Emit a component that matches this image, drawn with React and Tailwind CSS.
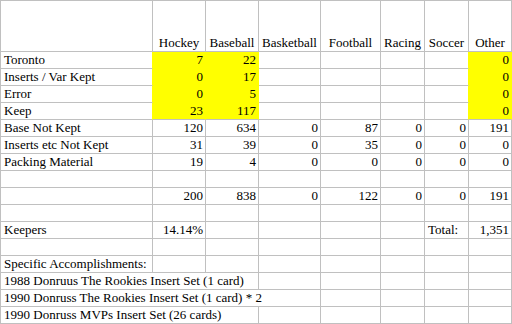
const GRAY_R = "border-r-[#c0c0c0]";
const GRAY_B = "border-b-[#c0c0c0]";
const YEL_R = "border-r-[#ffff00]";
const YEL_B = "border-b-[#ffff00]";

const sports = ["Hockey", "Baseball", "Basketball", "Football", "Racing", "Soccer", "Other"];

const rows = [
  { label: "Toronto", vals: ["7", "22", "", "", "", "", "0"], yellow: true },
  { label: "Inserts / Var Kept", vals: ["0", "17", "", "", "", "", "0"], yellow: true },
  { label: "Error", vals: ["0", "5", "", "", "", "", "0"], yellow: true },
  { label: "Keep", vals: ["23", "117", "", "", "", "", "0"], yellow: true, last: true },
  { label: "Base Not Kept", vals: ["120", "634", "0", "87", "0", "0", "191"] },
  { label: "Inserts etc Not Kept", vals: ["31", "39", "0", "35", "0", "0", "0"] },
  { label: "Packing Material", vals: ["19", "4", "0", "0", "0", "0", "0"] },
  { label: "", vals: ["", "", "", "", "", "", ""] },
  { label: "", vals: ["200", "838", "0", "122", "0", "0", "191"] },
  { label: "", vals: ["", "", "", "", "", "", ""] },
];

const Cell = ({ children, align = "right", bg = "", r = GRAY_R, b = GRAY_B, span = "" }) => {
  const alignCls =
    align === "left" ? "justify-start pl-[3px]" : align === "center" ? "justify-center" : "justify-end pr-[2px]";
  return (
    <div className={`flex items-end whitespace-nowrap border-r border-b pb-[1px] leading-[15px] ${alignCls} ${bg} ${r} ${b} ${span}`}>
      {children}
    </div>
  );
};

const Empty = ({ n }) => Array.from({ length: n }).map((_, i) => <Cell key={i} />);

export default function App() {
  return (
    <div
      className="grid h-[324px] w-[512px] grid-cols-[152px_53px_53px_62px_60px_44px_44px_43px] grid-rows-[51px_repeat(16,17px)] border-l border-t border-[#c0c0c0] bg-white text-[13px] text-black"
      style={{ fontFamily: '"Liberation Serif", "Times New Roman", serif' }}
    >
      <Cell />
      {sports.map((s) => (
        <Cell key={s} align="center">
          {s}
        </Cell>
      ))}

      {rows.map((row, i) => {
        const yb = row.yellow && !row.last ? YEL_B : GRAY_B;
        return (
          <div key={i} className="contents">
            <Cell align="left" r={row.yellow ? YEL_R : GRAY_R}>
              {row.label}
            </Cell>
            {row.vals.map((v, j) => {
              const isYellowCol = row.yellow && (j === 0 || j === 1 || j === 6);
              const hidesRight = row.yellow && (j === 0 || j === 1 || j === 5 || j === 6);
              return (
                <Cell
                  key={j}
                  bg={isYellowCol ? "bg-[#ffff00]" : ""}
                  r={hidesRight ? YEL_R : GRAY_R}
                  b={isYellowCol ? yb : GRAY_B}
                >
                  {v}
                </Cell>
              );
            })}
          </div>
        );
      })}

      <Cell align="left">Keepers</Cell>
      <Cell>14.14%</Cell>
      <Empty n={4} />
      <Cell align="left">Total:</Cell>
      <Cell>1,351</Cell>

      <Empty n={8} />

      <Cell align="left">Specific Accomplishments:</Cell>
      <Empty n={7} />

      <Cell align="left" span="col-span-3">1988 Donruus The Rookies Insert Set (1 card)</Cell>
      <Empty n={5} />

      <Cell align="left" span="col-span-4">1990 Donruss The Rookies Insert Set (1 card) * 2</Cell>
      <Empty n={4} />

      <Cell align="left" span="col-span-3">1990 Donruss MVPs Insert Set (26 cards)</Cell>
      <Empty n={5} />
    </div>
  );
}
